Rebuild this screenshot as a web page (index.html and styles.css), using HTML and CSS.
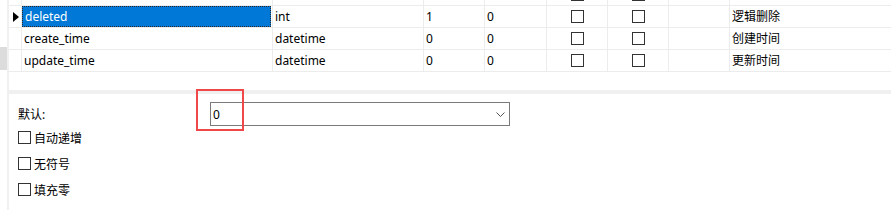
FILE: index.html
```html
<!DOCTYPE html>
<html>
<head>
<meta charset="utf-8">
<link rel="stylesheet" href="styles.css">
</head>
<body>
<div class="app">
  <div class="strip"><div class="thumb"></div></div>
  <div class="divider"></div>
  <div class="main">
    <div class="grid">
      <div class="c"></div><div class="c"></div><div class="c"></div><div class="c"></div><div class="c"></div>
      <div class="c cb-cell top"><span class="cb"></span></div><div class="c cb-cell top"><span class="cb"></span></div><div class="c"></div><div class="c last"></div>

      <div class="c hdr"><span class="arrow"></span></div>
      <div class="c sel"><span class="seltext">deleted</span></div>
      <div class="c txt">int</div>
      <div class="c txt">1</div>
      <div class="c txt">0</div>
      <div class="c cb-cell"><span class="cb"></span></div>
      <div class="c cb-cell"><span class="cb"></span></div>
      <div class="c"></div>
      <div class="c txt last">逻辑删除</div>

      <div class="c hdr"></div>
      <div class="c txt name">create_time</div>
      <div class="c txt">datetime</div>
      <div class="c txt">0</div>
      <div class="c txt">0</div>
      <div class="c cb-cell"><span class="cb"></span></div>
      <div class="c cb-cell"><span class="cb"></span></div>
      <div class="c"></div>
      <div class="c txt last">创建时间</div>

      <div class="c hdr"></div>
      <div class="c txt name">update_time</div>
      <div class="c txt">datetime</div>
      <div class="c txt">0</div>
      <div class="c txt">0</div>
      <div class="c cb-cell"><span class="cb"></span></div>
      <div class="c cb-cell"><span class="cb"></span></div>
      <div class="c"></div>
      <div class="c txt last">更新时间</div>
    </div>
    <div class="gap"></div>
    <div class="hbar"></div>
    <div class="panel">
      <div class="default-row">
        <span class="label">默认:</span>
        <div class="combo">
          <span class="combo-val">0</span>
          <svg class="chev" width="9" height="5" viewBox="0 0 9 5"><path d="M0.5 0.5 L4.5 4.5 L8.5 0.5" fill="none" stroke="#555" stroke-width="1"/></svg>
        </div>
      </div>
      <div class="opts">
        <div class="opt"><span class="cb"></span><span>自动递增</span></div>
        <div class="opt"><span class="cb"></span><span>无符号</span></div>
        <div class="opt"><span class="cb"></span><span>填充零</span></div>
      </div>
    </div>
  </div>
</div>
<div class="redbox"></div>
</body>
</html>
```
FILE: styles.css
```css
html, body {
  margin: 0;
  padding: 0;
  background: #fff;
}
body {
  width: 891px;
  height: 210px;
  overflow: hidden;
  position: relative;
  font-family: "Noto Sans", "Noto Sans CJK SC", sans-serif;
  font-size: 12px;
  color: #000;
}
.app {
  display: flex;
  height: 210px;
}
.strip {
  width: 7px;
  flex: none;
}
.thumb {
  margin-top: 47px;
  height: 23px;
  background: #dcdcdc;
}
.divider {
  width: 2px;
  flex: none;
  background: #f0f0f0;
}
.main {
  flex: 1;
  display: flex;
  flex-direction: column;
}
.grid {
  display: grid;
  grid-template-columns: 13px 251px 151px 61px 62px 61px 61px 61px 1fr;
  grid-template-rows: 6px 22px 22px 22px;
}
.c {
  box-sizing: border-box;
  border-right: 1px solid #ececec;
  border-bottom: 1px solid #ececec;
  overflow: hidden;
  display: flex;
  align-items: center;
  white-space: nowrap;
  line-height: 21px;
}
.c.last {
  border-right: none;
}
.txt {
  padding-left: 2px;
}
.name {
  padding-left: 2px;
}
.hdr {
  padding-left: 4px;
}
.arrow {
  width: 0;
  height: 0;
  border-left: 6px solid #000;
  border-top: 5px solid transparent;
  border-bottom: 5px solid transparent;
  margin-top: 1px;
}
.sel {
  padding: 0;
  align-items: stretch;
}
.seltext {
  flex: 1;
  background: #0078d7;
  color: #fff;
  outline: 1px dotted #2a2a2a;
  outline-offset: -1px;
  padding-left: 3px;
  margin-right: 1px;
  line-height: 21px;
}
.cb-cell {
  justify-content: center;
}
.cb-cell.top {
  align-items: flex-start;
}
.cb-cell.top .cb {
  margin-top: -12px;
}
.cb {
  display: inline-block;
  box-sizing: border-box;
  width: 13px;
  height: 13px;
  border: 1px solid #333;
  background: #fff;
  flex: none;
}
.gap {
  height: 18px;
}
.hbar {
  height: 4px;
  background: #f0f0f0;
}
.panel {
  padding: 8px 0 0 9px;
}
.default-row {
  display: flex;
  align-items: center;
  height: 24px;
}
.label {
  width: 192px;
  margin-top: -1px;
}
.combo {
  box-sizing: border-box;
  width: 300px;
  height: 24px;
  border: 1px solid #7a7a7a;
  display: flex;
  align-items: center;
  justify-content: space-between;
  padding: 0 4px 0 2px;
}
.chev {
  display: block;
  margin-top: 1px;
}
.opts {
  margin-top: 4px;
  display: flex;
  flex-direction: column;
  gap: 11px;
}
.opt {
  height: 15px;
  display: flex;
  align-items: center;
  gap: 3px;
}
.redbox {
  position: absolute;
  left: 196px;
  top: 89px;
  width: 48px;
  height: 42px;
  box-sizing: border-box;
  border: 2px solid #f04848;
}
```
